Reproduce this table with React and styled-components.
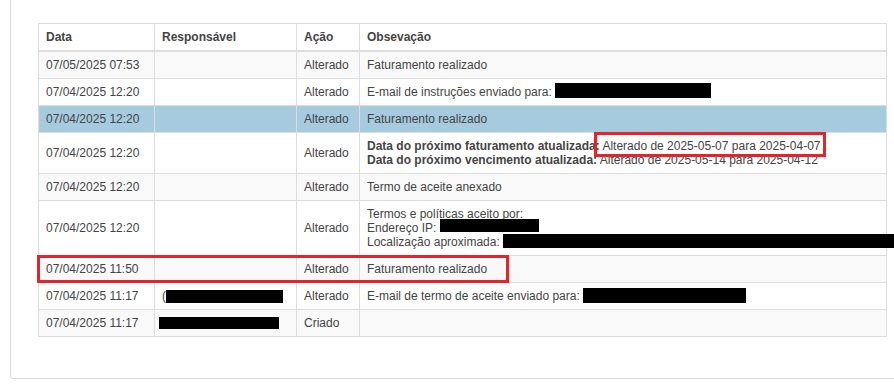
import styled, { createGlobalStyle } from "styled-components";

const GlobalStyle = createGlobalStyle`
  body {
    margin: 0;
    background: #fff;
    font-family: "Liberation Sans", Arial, sans-serif;
    overflow: hidden;
  }
`;

const Page = styled.div`
  padding-left: 10px;
`;

const Panel = styled.div`
  width: 900px;
  background: #fff;
  border: 1px solid #dcdcdc;
  border-top: 0;
  border-radius: 0 0 4px 4px;
  box-shadow: 0 1px 1px rgba(0, 0, 0, 0.05);
  padding: 23px 0 41px 27px;
`;

const TableWrap = styled.div`
  position: relative;
  width: 848px;
`;

const Table = styled.table`
  width: 848px;
  border-collapse: collapse;
  table-layout: fixed;
  font-size: 12px;
  color: #444;
`;

const Th = styled.th`
  text-align: left;
  font-weight: bold;
  padding: 6px 7px;
  line-height: 14px;
  border: 1px solid #ddd;
  border-bottom-width: 2px;
`;

const Row = styled.tr`
  background: ${(p) => (p.$active ? "#a6cbdf" : p.$stripe ? "#f9f9f9" : "#fff")};
`;

const Td = styled.td`
  padding: 6px 7px;
  line-height: 14px;
  border: 1px solid #ddd;
  vertical-align: middle;
`;

const Line = styled.div`
  white-space: nowrap;
`;

const Redact = styled.span`
  display: inline-block;
  background: #000;
  width: ${(p) => p.$w}px;
  height: ${(p) => p.$h}px;
  vertical-align: ${(p) => p.$v || 0}px;
  margin-top: -6px;
  margin-left: ${(p) => p.$ml || 0}px;
`;

// red annotation boxes drawn over the table
const Mark = styled.div`
  position: absolute;
  left: ${(p) => p.$x}px;
  top: ${(p) => p.$y}px;
  width: ${(p) => p.$w}px;
  height: ${(p) => p.$h}px;
  border: 3px solid #e4232b;
  box-sizing: border-box;
  pointer-events: none;
`;

const App = () => {
  return (
    <Page>
      <GlobalStyle />
      <Panel>
        <TableWrap>
          <Table>
            <colgroup>
              <col style={{ width: 116 }} />
              <col style={{ width: 142 }} />
              <col style={{ width: 63 }} />
              <col style={{ width: 527 }} />
            </colgroup>
            <thead>
              <tr>
                <Th>Data</Th>
                <Th>Responsável</Th>
                <Th>Ação</Th>
                <Th>Obsevação</Th>
              </tr>
            </thead>
            <tbody>
              <Row $stripe>
                <Td>07/05/2025 07:53</Td>
                <Td></Td>
                <Td>Alterado</Td>
                <Td>Faturamento realizado</Td>
              </Row>
              <Row>
                <Td>07/04/2025 12:20</Td>
                <Td></Td>
                <Td>Alterado</Td>
                <Td>
                  E-mail de instruções enviado para: <Redact $w={156} $h={15} $v={-2} />
                </Td>
              </Row>
              <Row $active>
                <Td>07/04/2025 12:20</Td>
                <Td></Td>
                <Td>Alterado</Td>
                <Td>Faturamento realizado</Td>
              </Row>
              <Row>
                <Td>07/04/2025 12:20</Td>
                <Td></Td>
                <Td>Alterado</Td>
                <Td>
                  <Line>
                    <b>Data do próximo faturamento atualizada:</b> Alterado de 2025-05-07 para 2025-04-07
                  </Line>
                  <Line>
                    <b>Data do próximo vencimento atualizada:</b> Alterado de 2025-05-14 para 2025-04-12
                  </Line>
                </Td>
              </Row>
              <Row $stripe>
                <Td>07/04/2025 12:20</Td>
                <Td></Td>
                <Td>Alterado</Td>
                <Td>Termo de aceite anexado</Td>
              </Row>
              <Row>
                <Td>07/04/2025 12:20</Td>
                <Td></Td>
                <Td>Alterado</Td>
                <Td>
                  <Line>Termos e políticas aceito por:</Line>
                  <Line>
                    Endereço IP: <Redact $w={99} $h={13} $v={0} />
                  </Line>
                  <Line>
                    Localização aproximada: <Redact $w={400} $h={14} $v={-2} />
                  </Line>
                </Td>
              </Row>
              <Row $stripe>
                <Td>07/04/2025 11:50</Td>
                <Td></Td>
                <Td>Alterado</Td>
                <Td>Faturamento realizado</Td>
              </Row>
              <Row>
                <Td>07/04/2025 11:17</Td>
                <Td>
                  (<Redact $w={117} $h={13} $v={-3} />
                </Td>
                <Td>Alterado</Td>
                <Td>
                  E-mail de termo de aceite enviado para: <Redact $w={163} $h={15} $v={-3} />
                </Td>
              </Row>
              <Row $stripe>
                <Td>07/04/2025 11:17</Td>
                <Td>
                  <Redact $w={120} $h={12} $v={-2} $ml={-3} />
                </Td>
                <Td>Criado</Td>
                <Td></Td>
              </Row>
            </tbody>
          </Table>
          <Mark $x={556} $y={109} $w={232} $h={25} />
          <Mark $x={-1} $y={232} $w={472} $h={28} />
        </TableWrap>
      </Panel>
    </Page>
  );
};

export default App;
